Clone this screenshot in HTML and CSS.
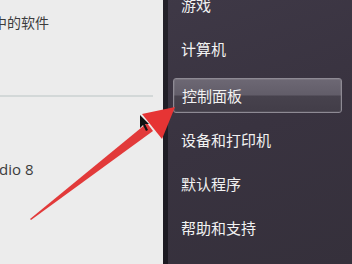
FILE: index.html
```html
<!DOCTYPE html>
<html>
<head>
<meta charset="utf-8">
<link rel="stylesheet" href="styles.css">
</head>
<body>
<div class="menu">
  <div class="left">
    <div class="prog">中的软件</div>
    <div class="sep"></div>
    <div class="prog latin">dio 8</div>
  </div>
  <div class="edge"></div>
  <div class="right">
    <div class="item">游戏</div>
    <div class="item">计算机</div>
    <div class="item active">控制面板</div>
    <div class="item">设备和打印机</div>
    <div class="item">默认程序</div>
    <div class="item">帮助和支持</div>
  </div>
</div>
<svg class="arrow" width="352" height="264" viewBox="0 0 352 264">
  <polygon points="30,219 147,123 153,131 31,220" fill="#e23a3a"/>
  <polygon points="142,114 175,107 162,139" fill="#e63434"/>
  <polygon points="140,115 140,128 143,125 146,131 148,130 145,124 149,124" fill="#111"/>
</svg>
</body>
</html>
```
FILE: styles.css
```css
html, body {
  margin: 0;
  padding: 0;
  width: 352px;
  height: 264px;
  overflow: hidden;
}
body {
  position: relative;
  font-family: "Noto Sans CJK SC", "Noto Sans", sans-serif;
}
.menu {
  display: flex;
  height: 264px;
}
.left {
  width: 163px;
  background: #ececec;
  display: flex;
  flex-direction: column;
}
.prog {
  color: #3c3c3c;
  font-size: 14px;
  line-height: 20px;
  margin-top: 12px;
  margin-left: -7px;
  white-space: nowrap;
}
.sep {
  height: 2px;
  width: 153px;
  background: #d3d8d8;
  margin-top: 63px;
}
.latin {
  font-family: "Open Sans", "Noto Sans", sans-serif;
  font-size: 15px;
  margin-left: -1px;
  margin-top: 62px;
}
.edge {
  width: 5px;
  background: linear-gradient(to bottom, #24222a, #1c1a22);
}
.right {
  flex: 1;
  background: linear-gradient(160deg, #3f3947 0%, #393340 50%, #35303b 100%);
  padding-left: 5px;
  padding-right: 10px;
  display: flex;
  flex-direction: column;
  margin-top: -17px;
}
.item {
  height: 44px;
  line-height: 44px;
  padding-left: 8px;
  color: #f2f2f2;
  font-size: 15px;
  white-space: nowrap;
  flex-shrink: 0;
}
.active {
  height: 33px;
  line-height: 33px;
  margin: 7px 0 5px;
  border: 1px solid #8e8a94;
  border-radius: 3px;
  background: linear-gradient(to bottom, #6d6874 0%, #625d69 48%, #47424d 52%, #423d48 100%);
  box-shadow: inset 0 0 0 1px rgba(255,255,255,0.08);
}
.arrow {
  position: absolute;
  left: 0;
  top: 0;
}
```
